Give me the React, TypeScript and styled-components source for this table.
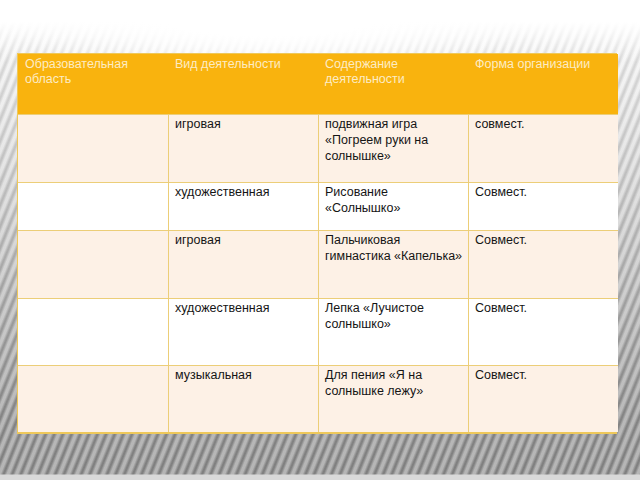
import * as React from 'react';
import styled, { createGlobalStyle } from 'styled-components';

const GlobalStyle = createGlobalStyle`
    html, body {
        margin: 0;
        padding: 0;
        background: #fff;
    }
`;

const Slide = styled.div`
    width: 640px;
    height: 480px;
    box-sizing: border-box;
    padding: 53px 0 0 17px;
    overflow: hidden;
    font-family: 'Liberation Sans', Arial, sans-serif;
    background:
        linear-gradient(to bottom, transparent 0 474px, #d9d9d9 475px 480px),
        radial-gradient(ellipse 300px 80px at 42% 0%, #fff 45%, rgba(255, 255, 255, 0) 100%),
        linear-gradient(to bottom, #fff 0px, #fff 22px, rgba(255, 255, 255, 0) 62px),
        repeating-linear-gradient(
            112deg,
            rgba(255, 255, 255, 0.35) 0px,
            rgba(255, 255, 255, 0.35) 2px,
            rgba(0, 0, 0, 0.1) 4.5px,
            rgba(0, 0, 0, 0.1) 5.5px,
            rgba(255, 255, 255, 0.35) 8px
        ),
        linear-gradient(
            to bottom,
            #fff 0px,
            #eeeeee 70px,
            #cfcfcf 200px,
            #adadad 320px,
            #939393 420px,
            #8e8e8e 474px
        );
`;

const Table = styled.div`
    display: grid;
    grid-template-columns: repeat(4, 150px);
    grid-template-rows: 60px 68px 48px 68px 67px 67px;
    width: 600px;
    box-sizing: border-box;
    border: 1px solid #eec85a;
    border-right-width: 2px;
    border-bottom-width: 2px;
`;

const HeadCell = styled.div`
    background: #f9b30e;
    color: #fdecc4;
    font-size: 12.5px;
    line-height: 15px;
    padding: 3px 2px 0 7px;
    white-space: pre-line;
`;

const Cell = styled.div<{ $odd: boolean; $first: boolean }>`
    background: ${(p) => (p.$odd ? '#fdf1e6' : '#ffffff')};
    color: #151515;
    font-size: 12.5px;
    line-height: 16px;
    padding: 1px 0 0 6px;
    white-space: pre;
    overflow: hidden;
    border-top: 1px solid #ecce78;
    border-left: ${(p) => (p.$first ? 'none' : '1px solid #ecce78')};
`;

const header = [
    'Образовательная\nобласть',
    'Вид деятельности',
    'Содержание\nдеятельности',
    'Форма организации',
];

const rows: string[][] = [
    ['', 'игровая', 'подвижная игра\n«Погреем руки на\nсолнышке»', 'совмест.'],
    ['', 'художественная', 'Рисование\n«Солнышко»', 'Совмест.'],
    ['', 'игровая', 'Пальчиковая\nгимнастика «Капелька»', 'Совмест.'],
    ['', 'художественная', 'Лепка «Лучистое\nсолнышко»', 'Совмест.'],
    ['', 'музыкальная', 'Для пения «Я на\nсолнышке лежу»', 'Совмест.'],
];

const App: React.FC = () => {
    return (
        <>
            <GlobalStyle />
            <Slide>
                <Table>
                    {header.map((h, i) => (
                        <HeadCell key={i}>{h}</HeadCell>
                    ))}
                    {rows.map((row, r) =>
                        row.map((text, c) => (
                            <Cell key={`${r}-${c}`} $odd={r % 2 === 0} $first={c === 0}>
                                {text}
                            </Cell>
                        ))
                    )}
                </Table>
            </Slide>
        </>
    );
};

export default App;
